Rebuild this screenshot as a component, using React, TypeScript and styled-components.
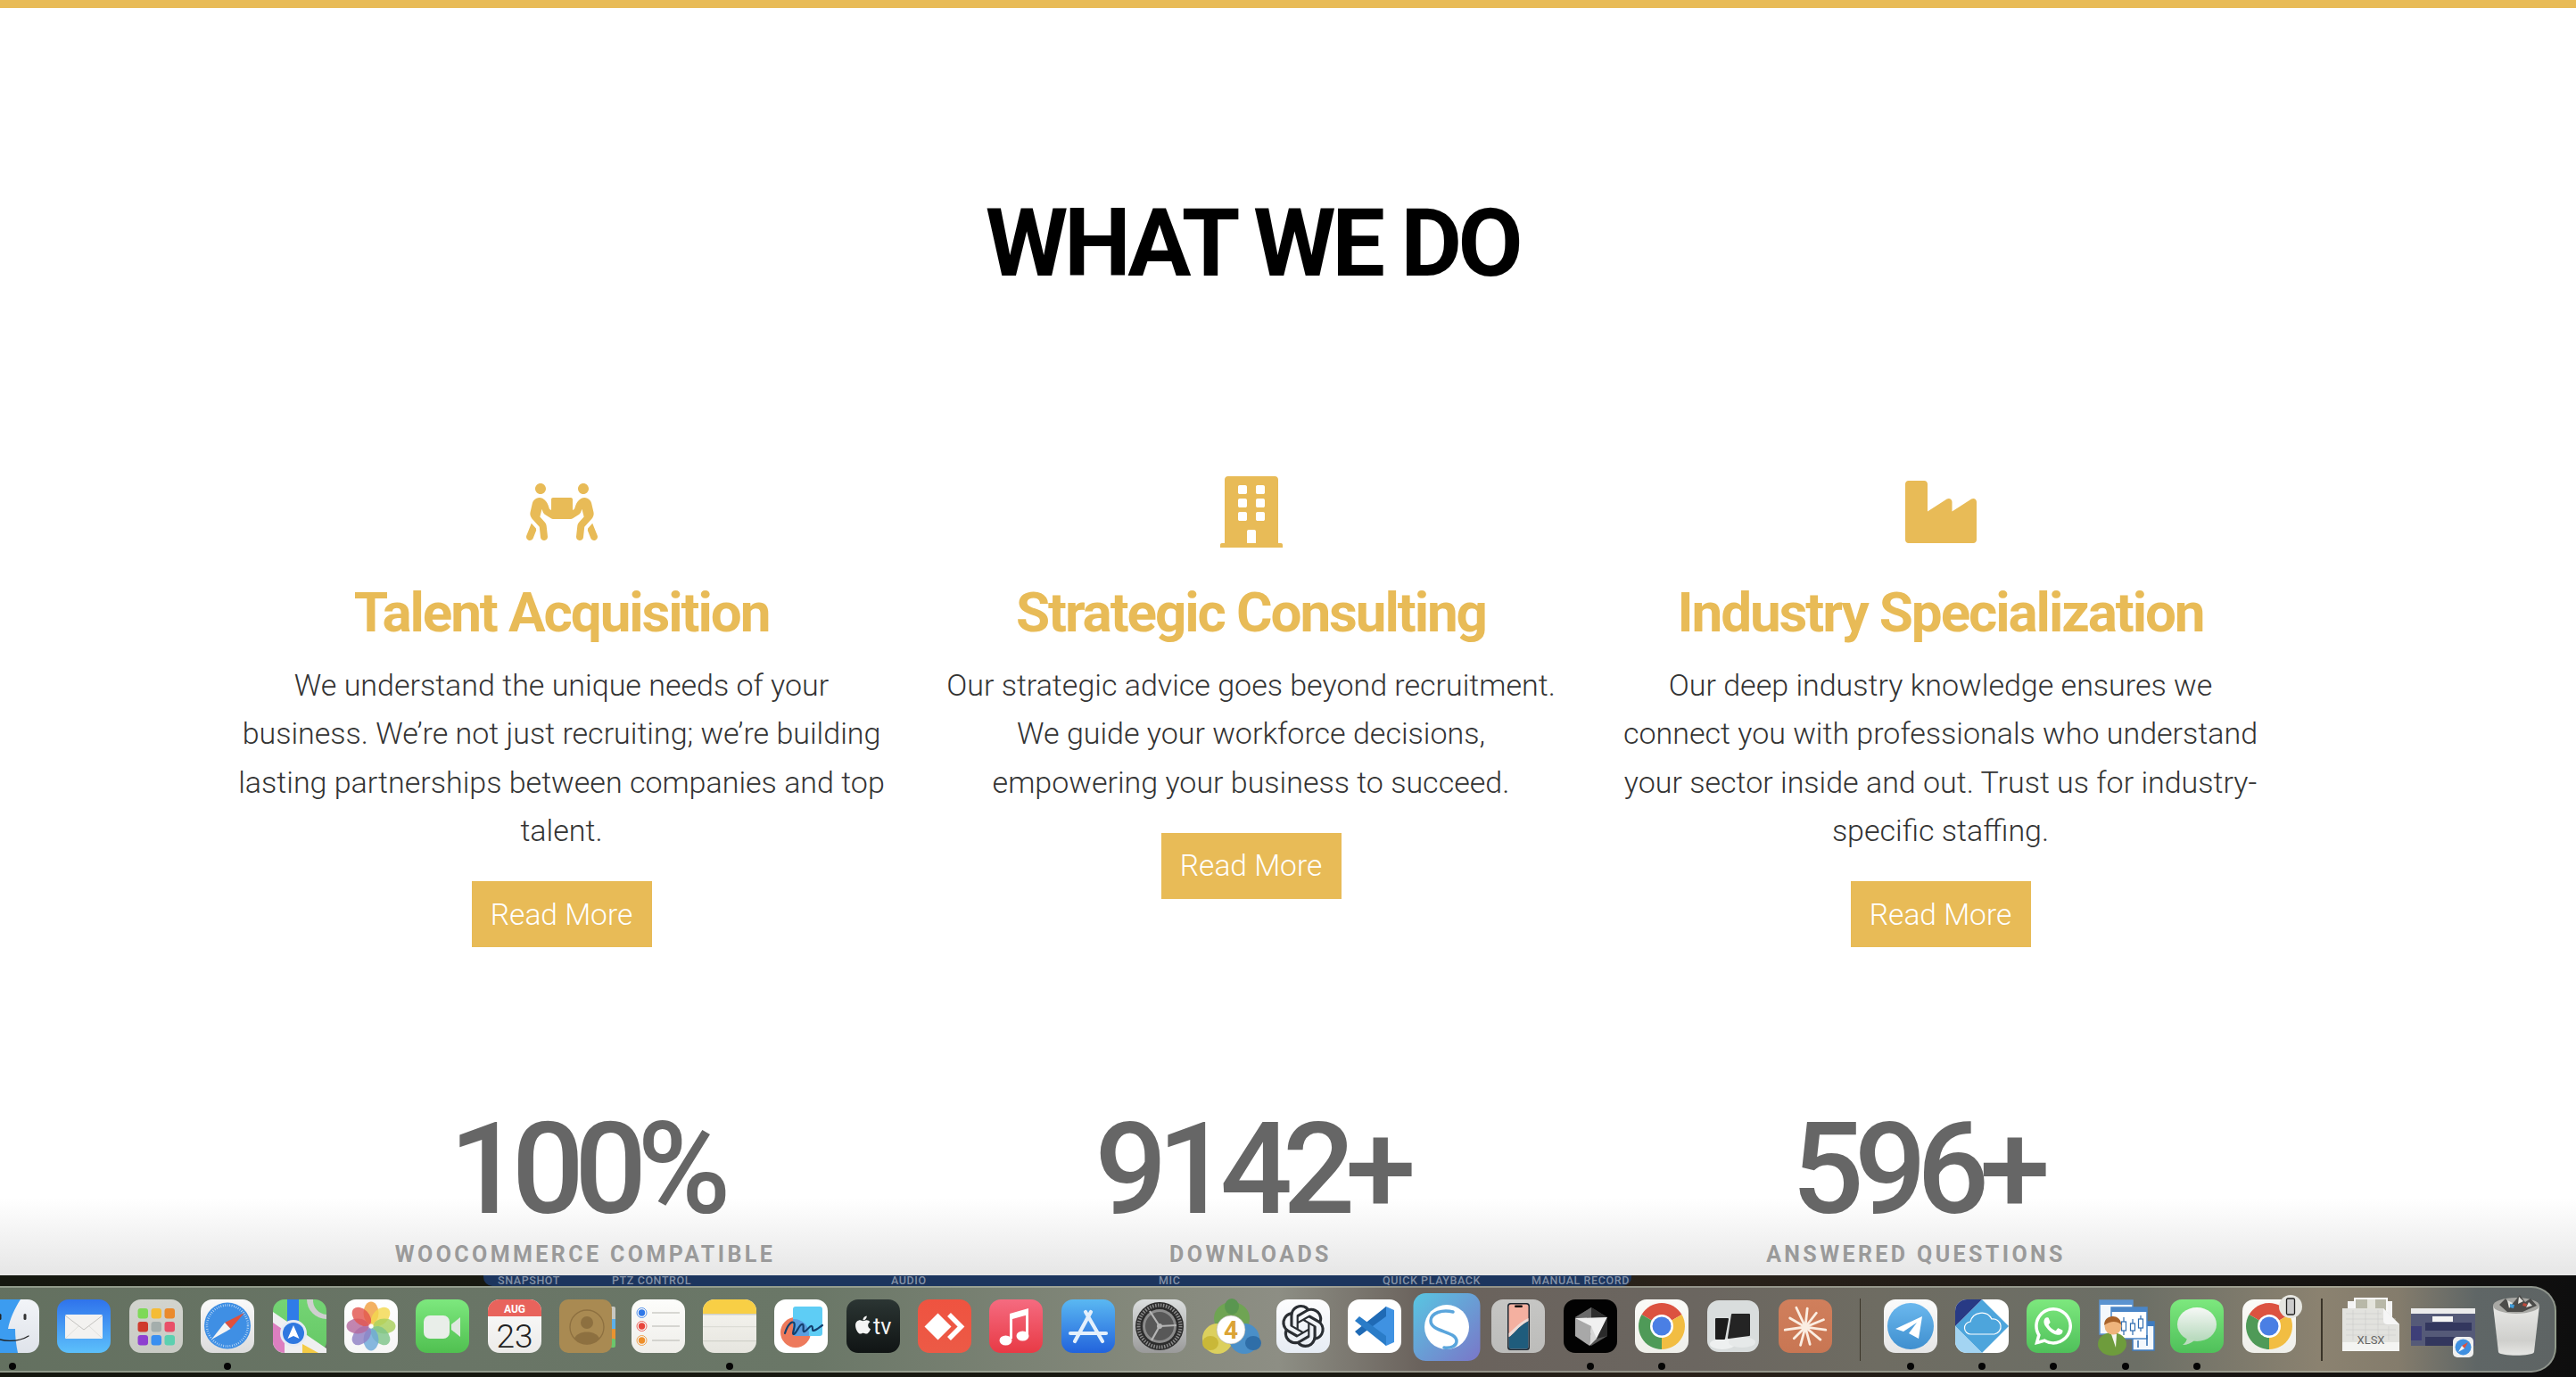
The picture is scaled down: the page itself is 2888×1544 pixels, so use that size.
import { FC, ReactNode } from 'react';
import styled, { createGlobalStyle } from 'styled-components';
import { FaPeopleCarry, FaBuilding, FaIndustry, FaApple, FaWhatsapp } from 'react-icons/fa';
import { SiOpenai } from 'react-icons/si';

const GOLD = '#e8bb57';
const dockFont = 'Roboto, sans-serif';

const services = [
  {
    icon: <FaPeopleCarry />,
    title: 'Talent Acquisition',
    text: 'We understand the unique needs of your business. We’re not just recruiting; we’re building lasting partnerships between companies and top talent.',
    width: 730,
  },
  {
    icon: <FaBuilding />,
    title: 'Strategic Consulting',
    text: 'Our strategic advice goes beyond recruitment. We guide your workforce decisions, empowering your business to succeed.',
    width: 700,
  },
  {
    icon: <FaIndustry />,
    title: 'Industry Specialization',
    text: 'Our deep industry knowledge ensures we connect you with professionals who understand your sector inside and out. Trust us for industry-specific staffing.',
    width: 730,
  },
];

const stats = [
  { value: '100%', label: 'WooCommerce Compatible' },
  { value: '9142+', label: 'Downloads' },
  { value: '596+', label: 'Answered Questions' },
];

const toolbarLabels = [
  { label: 'SNAPSHOT', width: 128 },
  { label: 'PTZ CONTROL', width: 313 },
  { label: 'AUDIO', width: 300 },
  { label: 'MIC', width: 251 },
  { label: 'QUICK PLAYBACK', width: 167 },
  { label: 'MANUAL RECORD', width: 110 },
];

// app icon tile, 60 units square, drawn with an optional top to bottom gradient
const Tile: FC<{ top: string; bottom?: string; children?: ReactNode }> = ({ top, bottom, children }) => {
  const gid = 'g' + (top + (bottom || top)).replace(/#/g, '');
  return (
    <svg viewBox="0 0 60 60" width="60" height="60">
      <defs>
        <linearGradient id={gid} x1="0" y1="0" x2="0" y2="1">
          <stop offset="0" stopColor={top} />
          <stop offset="1" stopColor={bottom || top} />
        </linearGradient>
      </defs>
      <rect width="60" height="60" rx="13" fill={`url(#${gid})`} />
      {children}
    </svg>
  );
};

const Finder = () => (
  <Tile top="#f2f4f8" bottom="#dfe3ea">
    <path d="M13 0h26c-6 9-12 22-14 33h8c0 9 1 18 3 27H13A13 13 0 0 1 0 47V13A13 13 0 0 1 13 0z" fill="#3c9cf0" />
    <rect x="14.500" y="16" width="3" height="7" rx="1.500" fill="#222" />
    <rect x="42.500" y="16" width="3" height="7" rx="1.500" fill="#333" />
    <path d="M3 39c14 10 34 9 45 2" fill="none" stroke="#222" strokeWidth="1.300" strokeLinecap="round" />
  </Tile>
);

const Mail = () => (
  <Tile top="#2f73ec" bottom="#5cc0fb">
    <rect x="9" y="17" width="42" height="27" rx="1.500" fill="#f3f2f0" />
    <path d="M9 18l21 16 21-16" fill="none" stroke="#c4c3c0" strokeWidth="1" />
    <path d="M9 44l15-14M51 44L36 30" fill="none" stroke="#dadad6" strokeWidth="0.800" />
  </Tile>
);

const launchColors = ['#7ed957', '#f5bc36', '#ea8a2c', '#cf3a2c', '#a4aeac', '#e94f68', '#8e3fd0', '#3a8ff0', '#5cd0b0'];
const Launchpad = () => (
  <Tile top="#d2d4ce" bottom="#c9cbc5">
    {launchColors.map((c, i) => (
      <rect key={c} x={9.500 + (i % 3) * 15} y={10 + Math.floor(i / 3) * 15} width="11.500" height="11.500" rx="3" fill={c} />
    ))}
  </Tile>
);

const CompassNeedle = () => (
  <>
    <path d="M49 15L33.500 33 27 26z" fill="#e0503c" />
    <path d="M12 45l15-19 6.500 7z" fill="#f4f4f4" />
  </>
);

const Safari = () => (
  <Tile top="#fafafa" bottom="#dcdcdc">
    <circle cx="30" cy="29.500" r="26" fill="#3f8fe4" />
    <circle cx="30" cy="29.500" r="23" fill="none" stroke="#cfe4f8" strokeWidth="2.500" strokeDasharray="0.700 1.800" />
    <CompassNeedle />
  </Tile>
);

const Maps = () => (
  <Tile top="#74d474" bottom="#66c866">
    <path d="M0 14L60 55v5H13A13 13 0 0 1 0 47z" fill="#efeff1" />
    <path d="M0 26l13 9v25A13 13 0 0 1 0 47z" fill="#dc7fc0" />
    <path d="M33 50l18 10H33z" fill="#f4cb45" />
    <path d="M38 0a22 22 0 0 0 22 22v-5a16 16 0 0 1-15-17z" fill="#cfcfcf" />
    <path d="M16 0h13v30H16z" fill="#2f7ce8" />
    <circle cx="23" cy="38" r="15" fill="#e6ebf4" />
    <circle cx="23" cy="38" r="12" fill="#2f78e0" />
    <path d="M23 29l6.500 15-6.500-3-6.500 3z" fill="#fff" />
  </Tile>
);

const petals = ['#f0a040', '#f3d84f', '#a8cf5c', '#7fc48a', '#6ca8d8', '#8f80c4', '#b56a9f', '#e2564f'];
const Photos = () => (
  <Tile top="#fff" bottom="#f6f6f6">
    {petals.map((c, i) => (
      <ellipse key={c} cx="30" cy="15" rx="8.500" ry="12.500" fill={c} opacity="0.82" transform={`rotate(${i * 45} 30 30)`} />
    ))}
  </Tile>
);

const FaceTime = () => (
  <Tile top="#7de87e" bottom="#50c050">
    <rect x="9" y="18" width="29" height="26" rx="7" fill="#e9eee9" />
    <path d="M40 28l10-8v22l-10-8z" fill="#dfe8df" />
  </Tile>
);

const Calendar = () => (
  <Tile top="#fcfcfc" bottom="#ecebe9">
    <path d="M0 19V13A13 13 0 0 1 13 0h34a13 13 0 0 1 13 13v6z" fill="#e8635c" />
    <text x="30" y="15" textAnchor="middle" fontSize="12" fontWeight="700" fill="#fff" fontFamily={dockFont}>AUG</text>
    <text x="30" y="54" textAnchor="middle" fontSize="37" fontWeight="300" fill="#222" fontFamily={dockFont}>23</text>
  </Tile>
);

const Contacts = () => (
  <svg viewBox="0 0 60 60" width="60" height="60">
    <rect x="54" y="8" width="9" height="16" rx="2" fill="#c8c8c2" />
    <rect x="54" y="22" width="9" height="12" fill="#5cb0ea" />
    <rect x="54" y="33" width="9" height="12" fill="#ea9330" />
    <rect x="54" y="44" width="9" height="10" rx="2" fill="#6cc66c" />
    <rect width="59" height="60" rx="10" fill="#a98a52" />
    <circle cx="31" cy="31" r="19" fill="none" stroke="#8d7040" strokeWidth="1.300" />
    <circle cx="31" cy="26" r="7" fill="#8d7040" />
    <path d="M17 44c3-10 25-10 28 0a19 19 0 0 1-28 0z" fill="#8d7040" />
  </svg>
);

const Reminders = () => (
  <Tile top="#fdfdfb" bottom="#efeeea">
    {[
      { y: 15, c: '#2f78e8' },
      { y: 30, c: '#e8453c' },
      { y: 46, c: '#ef8f2a' },
    ].map(r => (
      <g key={r.y}>
        <circle cx="11.500" cy={r.y} r="5.500" fill="none" stroke={r.c} strokeWidth="0.800" />
        <circle cx="11.500" cy={r.y} r="3.700" fill={r.c} />
        <rect x="23" y={r.y - 0.500} width="31" height="1" fill="#b5b5b0" />
      </g>
    ))}
  </Tile>
);

const Notes = () => (
  <Tile top="#f7f6f1" bottom="#e6e5df">
    <path d="M0 16V13A13 13 0 0 1 13 0h34a13 13 0 0 1 13 13v3z" fill="#f8cf45" />
    <rect y="16" width="60" height="1.500" fill="#cfcfc8" />
    <rect y="30" width="60" height="1.200" fill="#dcdcd5" />
    <rect y="46" width="60" height="1.200" fill="#d0d0c9" />
  </Tile>
);

const Freeform = () => (
  <Tile top="#fff">
    <circle cx="24" cy="37" r="17" fill="#ed7a5c" />
    <rect x="21" y="8" width="33" height="33" rx="3" fill="#5ecdf5" />
    <path d="M21 22a17 17 0 0 1 18 19H24a3 3 0 0 1-3-3z" fill="#5a9fe0" />
    <path d="M12 38c3-10 8-14 10-12 3 3-3 13 0 13 3-1 7-13 10-11 2 2-1 9 2 8s6-7 8-6c2 1 0 5 2 5 3 0 7-4 10-6" fill="none" stroke="#14406e" strokeWidth="2.200" strokeLinecap="round" />
  </Tile>
);

const AppleTv = () => (
  <Tile top="#2b3533" bottom="#101414">
    <FaApple x={7} y={17} size={23} color="#f4f4f4" />
    <text x="30" y="39" fontSize="25" fontWeight="400" fill="#f4f4f4" fontFamily={dockFont}>tv</text>
  </Tile>
);

const AnyDesk = () => (
  <Tile top="#ef5340" bottom="#ec5a46">
    <path d="M22.500 15.500l15 15-15 15-15-15z" fill="#fff" />
    <path d="M35 17l13.500 13.500L35 44" fill="none" stroke="#fff" strokeWidth="5.500" />
  </Tile>
);

const Music = () => (
  <Tile top="#f56b80" bottom="#e83a45">
    <path d="M23 16l21-6v7l-18 5v22h-3zM41 12h3v29h-3z" fill="#fff" />
    <ellipse cx="18.500" cy="46" rx="7" ry="5.500" fill="#fff" />
    <ellipse cx="37.500" cy="41" rx="7" ry="5.500" fill="#fff" />
  </Tile>
);

const AppStore = () => (
  <Tile top="#5ab8f2" bottom="#2263dc">
    <path d="M27 14l19 33M33 14L15 47" stroke="#e4f0fc" strokeWidth="4.200" strokeLinecap="round" />
    <path d="M10 38h40" stroke="#e4f0fc" strokeWidth="4.200" strokeLinecap="round" />
  </Tile>
);

const Settings = () => (
  <Tile top="#dcdfdf" bottom="#9a9a9a">
    <circle cx="30" cy="30" r="27" fill="#2c2c2c" />
    <circle cx="30" cy="30" r="23.500" fill="none" stroke="#8a8a8a" strokeWidth="4" strokeDasharray="1.500 1.500" />
    <circle cx="30" cy="30" r="19" fill="#8c8c8c" />
    <circle cx="30" cy="30" r="16" fill="#585858" />
    <g stroke="#b5b5b5" strokeWidth="2.200">
      <path d="M30 30L19 13" />
      <path d="M30 30l19-1" />
      <path d="M30 30L21 46" />
    </g>
    <circle cx="30" cy="30" r="3" fill="#b5b5b5" />
  </Tile>
);

const MetaTrader = () => (
  <svg viewBox="0 0 60 60" width="60" height="60">
    <ellipse cx="30" cy="21" rx="20" ry="18" fill="#6fa453" />
    <ellipse cx="30" cy="8" rx="8" ry="9" fill="#5a9650" />
    <circle cx="14" cy="44" r="17" fill="#dcd05e" />
    <circle cx="44" cy="44" r="17" fill="#4a8fc8" />
    <ellipse cx="6" cy="49" rx="9" ry="8" fill="#c9b838" />
    <ellipse cx="54" cy="49" rx="9" ry="8" fill="#2f6ea8" />
    <circle cx="29" cy="34" r="16" fill="#fff" stroke="#a8a8a0" strokeWidth="0.600" />
    <text x="29" y="44" textAnchor="middle" fontSize="28" fontWeight="700" fill="#dba436" fontFamily={dockFont}>4</text>
  </svg>
);

const ChatGpt = () => (
  <Tile top="#fdfdfe" bottom="#e6ecf4">
    <SiOpenai x={6} y={6} size={48} color="#2a2e33" />
  </Tile>
);

const VsCode = () => (
  <Tile top="#fff">
    <path d="M43 8L21 30l22 22 9-4V12z" fill="#3f92e2" />
    <path d="M43 8L8 36l5 5 30-22z" fill="#1f6ab5" />
    <path d="M8 24l5-5 30 22v11z" fill="#2a7cc8" />
  </Tile>
);

const Simplenote = () => (
  <svg viewBox="0 0 60 60" width="60" height="60">
    <defs>
      <linearGradient id="sn" x1="0" y1="0" x2="1" y2="1">
        <stop offset="0" stopColor="#58c6e2" />
        <stop offset="1" stopColor="#7a76c8" />
      </linearGradient>
    </defs>
    <rect x="-7.500" y="-7" width="75" height="76" rx="14" fill="url(#sn)" />
    <circle cx="30" cy="31" r="25" fill="#fff" />
    <path d="M37 14c-12-3-25 1-25 10 0 13 29 11 29 23 0 5-6 8-14 7" fill="none" stroke="#5aa5dc" strokeWidth="3.500" strokeLinecap="round" />
  </svg>
);

const IPhone = () => (
  <Tile top="#c6c6c4" bottom="#bcbcba">
    <rect x="18" y="4" width="25" height="53" rx="3.500" fill="#1b2630" />
    <rect x="19.500" y="5.500" width="22" height="50" rx="2.500" fill="#f4b0a0" />
    <path d="M19.500 42c4-1 10-12 22-18v29a2.500 2.500 0 0 1-2.500 2.500H22a2.500 2.500 0 0 1-2.500-2.500z" fill="#1f5c7c" />
    <path d="M19.500 42c4-1 10-12 22-18v-3c-12 6-18 14-22 17z" fill="#ecdcd8" />
    <rect x="26" y="6.500" width="9" height="2.500" rx="1.200" fill="#111" />
  </Tile>
);

const BlackCube = () => (
  <Tile top="#020202">
    <path d="M31 9l18 11v21L31 52 13 41V20z" fill="#555" />
    <path d="M31 9l18 11-18 1z" fill="#2e2e2e" />
    <path d="M31 9L13 20l18 1z" fill="#6a6a6a" />
    <path d="M13 21l36-1-12 24z" fill="#f0f0f0" />
    <path d="M13 21l18 9-2 22-16-11z" fill="#a8a8a8" />
    <path d="M31 30l6 14-8 8z" fill="#d8d8d8" />
    <path d="M49 20v21l-12 3z" fill="#2a2a2a" />
  </Tile>
);

const ChromeMark = () => (
  <Tile top="#fbfbf8" bottom="#efefea">
    <path d="M30 30L7.500 17A26 26 0 0 1 52.500 17z" fill="#dc5240" />
    <path d="M30 30L7.500 17A26 26 0 0 0 30 56z" fill="#4f9a58" />
    <path d="M30 30L52.500 17A26 26 0 0 1 30 56z" fill="#f2bd42" />
    <circle cx="30" cy="30" r="13" fill="#fff" />
    <circle cx="30" cy="30" r="10.500" fill="#4a7fe4" />
  </Tile>
);

const ChromeDevice = () => (
  <BadgedIcon>
    <ChromeMark />
    <DeviceBadge>
      <svg viewBox="0 0 26 26" width="26" height="26">
        <circle cx="13" cy="13" r="13" fill="#e6e6e1" />
        <rect x="8.500" y="4" width="9" height="18" rx="1.500" fill="#ccc" stroke="#222" strokeWidth="1.300" />
      </svg>
    </DeviceBadge>
  </BadgedIcon>
);

const Windows = () => (
  <svg viewBox="0 0 60 60" width="60" height="60">
    <rect x="1" y="1" width="58" height="58" rx="13" fill="#d9dddd" />
    <ellipse cx="18" cy="50" rx="14" ry="6" fill="#eef0f0" />
    <ellipse cx="40" cy="48" rx="15" ry="6" fill="#e6e9e9" />
    <path d="M11 22h13l-4 22h-9z" fill="#1c1c1c" stroke="#1c1c1c" strokeWidth="2" strokeLinejoin="round" />
    <path d="M29 17h19v23l-23 3z" fill="#242424" stroke="#242424" strokeWidth="2" strokeLinejoin="round" />
  </svg>
);

const rays = [
  { a: -25, l: 24 },
  { a: 6, l: 21 },
  { a: 38, l: 20 },
  { a: 68, l: 22 },
  { a: 98, l: 23 },
  { a: 130, l: 22 },
  { a: 165, l: 20 },
  { a: 195, l: 21 },
  { a: 225, l: 18 },
  { a: 262, l: 23 },
  { a: 300, l: 20 },
];

const Claude = () => (
  <Tile top="#d07f5c" bottom="#c87653">
    <g stroke="#fbeee2" strokeWidth="2.800" strokeLinecap="round">
      {rays.map(r => (
        <path key={r.a} d={`M30 31V${31 - r.l}`} transform={`rotate(${r.a} 30 31)`} />
      ))}
    </g>
  </Tile>
);

const Telegram = () => (
  <Tile top="#fbfbfb" bottom="#e6e6e6">
    <defs>
      <linearGradient id="tg" x1="0" y1="0" x2="0" y2="1">
        <stop offset="0" stopColor="#6bb8ee" />
        <stop offset="1" stopColor="#3f8fcf" />
      </linearGradient>
    </defs>
    <circle cx="30" cy="30" r="26" fill="url(#tg)" />
    <path d="M13 33l30-14-4 25-11-6 9-12-15 10z" fill="#fff" />
  </Tile>
);

const CloudApp = () => (
  <Tile top="#fff">
    <path d="M30 0l30 30-30 30L0 30z" fill="#4da5dc" />
    <path d="M0 30L30 0H13A13 13 0 0 0 0 13z" fill="#283a85" />
    <path d="M0 30l30 30H13A13 13 0 0 1 0 47z" fill="#a3d4f2" />
    <path d="M18 39a7 7 0 0 1-1-14 13 13 0 0 1 24-3 8.500 8.500 0 0 1 3 17z" fill="none" stroke="#fff" strokeWidth="1.200" />
  </Tile>
);

const WhatsApp = () => (
  <Tile top="#7de87e" bottom="#4fc05a">
    <FaWhatsapp x={6} y={6} size={48} color="#fff" />
  </Tile>
);

const Traders = () => (
  <svg viewBox="0 0 60 60" width="60" height="60">
    <rect x="1" y="1" width="37" height="38" fill="#f4f8fc" stroke="#5b93d0" strokeWidth="1.500" />
    <rect x="1" y="1" width="37" height="5" fill="#5b93d0" />
    <rect x="38" y="25" width="24" height="32" fill="#f4f8fc" stroke="#3f7cc0" strokeWidth="1.500" />
    <rect x="38" y="25" width="24" height="5" fill="#3f7cc0" />
    <rect x="14" y="9" width="40" height="35" fill="#fff" stroke="#4a86c8" strokeWidth="1.500" />
    <rect x="14" y="9" width="40" height="5" fill="#4a86c8" />
    <g stroke="#2f6db0" strokeWidth="1.200" fill="#fff">
      <path d="M28 20v20M38 22v18M47 18v18" />
      <rect x="25.500" y="25" width="5" height="10" />
      <rect x="35.500" y="27" width="5" height="8" />
      <rect x="44.500" y="22" width="5" height="10" />
    </g>
    <path d="M44 46v8M54 40v12" stroke="#2f6db0" strokeWidth="1.500" />
    <ellipse cx="15" cy="50" rx="16" ry="13" fill="#6e9c3c" />
    <path d="M14 39h6l-1 15z" fill="#f6f6f0" />
    <circle cx="16" cy="30" r="9.500" fill="#efb47c" />
    <path d="M6 29c0-8 6-10 10-10s9 3 9 9c-5-4-12-4-19 1z" fill="#a8622a" />
  </svg>
);

const Messages = () => (
  <Tile top="#7de87e" bottom="#4fc05a">
    <defs>
      <linearGradient id="msg" x1="0" y1="0" x2="0" y2="1">
        <stop offset="0" stopColor="#f6f8f6" />
        <stop offset="1" stopColor="#b4d8ba" />
      </linearGradient>
    </defs>
    <ellipse cx="30" cy="28" rx="22" ry="19" fill="url(#msg)" />
    <path d="M19 42c0 4-2 7-5 9 5 0 10-2 14-6z" fill="#bcdcc0" />
  </Tile>
);

const XlsxFile = () => (
  <svg viewBox="0 0 64 60" width="64" height="60">
    <rect x="6" y="4" width="50" height="18" fill="#f4f4f4" />
    <rect x="13" y="0" width="38" height="22" fill="#f8f8f8" />
    <rect x="15" y="2" width="34" height="20" fill="#b8b8a8" />
    <rect x="28" y="2" width="9" height="20" fill="#e4e4dc" />
    <path d="M0 12h46l18 18v30H0z" fill="#e2e2de" />
    <rect y="50" width="64" height="10" fill="#f4f4f2" />
    <g stroke="#cfcfca" strokeWidth="0.600">
      <path d="M4 18h40M4 24h56M4 30h56M4 36h56M4 42h56" />
      <path d="M12 14v34M26 14v34M40 14v34M52 32v16" />
    </g>
    <path d="M46 12v13c0 4 2 5 5 5h13z" fill="#f6f6f6" />
    <text x="32" y="52" textAnchor="middle" fontSize="13" fill="#666" fontFamily={dockFont}>XLSX</text>
  </svg>
);

const WindowThumb = () => (
  <svg viewBox="0 0 72 66" width="72" height="66">
    <rect y="10" width="72" height="42" fill="#555a78" />
    <rect y="10" width="72" height="6" fill="#ececec" />
    <rect x="24" y="19" width="23" height="6" fill="#f4f4f4" />
    <rect x="16" y="26" width="52" height="9" fill="#33375e" />
    <rect x="16" y="42" width="50" height="10" fill="#33375e" />
    <rect y="30" width="12" height="16" fill="#3e3f78" />
    <rect x="47" y="42" width="23" height="23" rx="5" fill="#f0f0f0" />
    <circle cx="58.500" cy="53.500" r="9" fill="#3f8fe0" />
    <path d="M64 48l-4 7-3-3z" fill="#e0503c" />
    <path d="M53 59l4-7 3 3z" fill="#f4f4f4" />
  </svg>
);

const Trash = () => (
  <svg viewBox="0 0 54 70" width="54" height="70">
    <defs>
      <linearGradient id="bin" x1="0" y1="0" x2="0" y2="1">
        <stop offset="0" stopColor="#e8e8e6" />
        <stop offset="0.700" stopColor="#cfcfcc" />
        <stop offset="1" stopColor="#e6e6e4" />
      </linearGradient>
    </defs>
    <path d="M1 12l6 52c1 5 39 5 40 0l6-52z" fill="url(#bin)" />
    <ellipse cx="27" cy="12" rx="26" ry="9" fill="#a8a8a4" />
    <path d="M8 11l7-7 6 8 5-6 5-6 6 8 6-4 7 8-16 7H17z" fill="#4c4c4a" />
    <path d="M17 6l6 3-4 6zM30 2l5 5-6 3zM41 8l4 4-7 2z" fill="#e4e4e0" />
    <path d="M20 10l5 1-1 4-4-1z" fill="#3f9bd8" />
    <path d="M35 9l4 1-1 3-4-1z" fill="#c04a3c" />
  </svg>
);

const dockApps = [
  { key: 'finder', node: <Finder />, dot: true },
  { key: 'mail', node: <Mail /> },
  { key: 'launchpad', node: <Launchpad /> },
  { key: 'safari', node: <Safari />, dot: true },
  { key: 'maps', node: <Maps /> },
  { key: 'photos', node: <Photos /> },
  { key: 'facetime', node: <FaceTime /> },
  { key: 'calendar', node: <Calendar /> },
  { key: 'contacts', node: <Contacts /> },
  { key: 'reminders', node: <Reminders /> },
  { key: 'notes', node: <Notes />, dot: true },
  { key: 'freeform', node: <Freeform /> },
  { key: 'tv', node: <AppleTv /> },
  { key: 'anydesk', node: <AnyDesk /> },
  { key: 'music', node: <Music /> },
  { key: 'appstore', node: <AppStore /> },
  { key: 'settings', node: <Settings /> },
  { key: 'mt4', node: <MetaTrader /> },
  { key: 'chatgpt', node: <ChatGpt /> },
  { key: 'vscode', node: <VsCode /> },
  { key: 'simplenote', node: <Simplenote /> },
  { key: 'iphone', node: <IPhone /> },
  { key: 'cube', node: <BlackCube />, dot: true },
  { key: 'chrome', node: <ChromeMark />, dot: true },
  { key: 'windows', node: <Windows /> },
  { key: 'claude', node: <Claude /> },
];

const recentApps = [
  { key: 'telegram', node: <Telegram />, dot: true },
  { key: 'cloud', node: <CloudApp />, dot: true },
  { key: 'whatsapp', node: <WhatsApp />, dot: true },
  { key: 'traders', node: <Traders />, dot: true },
  { key: 'messages', node: <Messages />, dot: true },
  { key: 'chrome2', node: <ChromeDevice /> },
];

const App: FC = () => (
  <>
    <GlobalStyle />
    <Page>
      <TopBar />
      <Content>
        <Heading>WHAT WE DO</Heading>
        <Services>
          {services.map(s => (
            <Service key={s.title}>
              <ServiceIcon>{s.icon}</ServiceIcon>
              <ServiceTitle>{s.title}</ServiceTitle>
              <ServiceText $width={s.width}>{s.text}</ServiceText>
              <ReadMore>Read More</ReadMore>
            </Service>
          ))}
        </Services>
        <Stats>
          {stats.map(s => (
            <Stat key={s.label}>
              <StatValue>{s.value}</StatValue>
              <StatLabel>{s.label}</StatLabel>
            </Stat>
          ))}
        </Stats>
      </Content>
      <Desktop>
        <WindowStrip>
          {toolbarLabels.map(t => (
            <StripLabel key={t.label} $width={t.width}>{t.label}</StripLabel>
          ))}
        </WindowStrip>
        <Dock>
          {dockApps.map(item => (
            <DockItem key={item.key}>
              {item.node}
              {item.dot && <RunDot />}
            </DockItem>
          ))}
          <DockDivider $before={10.5} $after={5} />
          {recentApps.map(item => (
            <DockItem key={item.key}>
              {item.node}
              {item.dot && <RunDot />}
            </DockItem>
          ))}
          <DockDivider $before={8.5} $after={2} />
          <StackItem $lead={0} $top={-2}><XlsxFile /></StackItem>
          <StackItem $lead={-7.5} $top={0}><WindowThumb /></StackItem>
          <StackItem $lead={-1.5} $top={-5}><Trash /></StackItem>
        </Dock>
      </Desktop>
    </Page>
  </>
);

const GlobalStyle = createGlobalStyle`
  html, body {
    margin: 0;
    padding: 0;
    background: #fff;
  }
  body {
    font-family: Roboto, sans-serif;
  }
`;

const Page = styled.div`
  width: 2888px;
  height: 1544px;
  display: flex;
  flex-direction: column;
  overflow: hidden;
`;

const TopBar = styled.div`
  height: 9px;
  flex-shrink: 0;
  background: ${GOLD};
`;

const Content = styled.div`
  height: 1421px;
  flex-shrink: 0;
  padding-left: 243px;
  box-sizing: border-box;
  background: linear-gradient(to bottom, #fff 0, #fff 1335px, #e6e6e6 1421px);
`;

const Heading = styled.h2`
  width: 2322px;
  margin: 0;
  padding-top: 198px;
  text-align: center;
  font-size: 106px;
  line-height: 132px;
  font-weight: 700;
  letter-spacing: -4.5px;
  color: #000;
`;

const Services = styled.div`
  width: 2322px;
  display: grid;
  grid-template-columns: repeat(3, 773px);
  margin-top: 195px;
`;

const Service = styled.div`
  display: flex;
  flex-direction: column;
  align-items: center;
  height: 530px;
`;

const ServiceIcon = styled.div`
  height: 80px;
  display: flex;
  align-items: center;
  justify-content: center;
  color: ${GOLD};
  font-size: 80px;
  svg {
    display: block;
  }
`;

const ServiceTitle = styled.h3`
  margin: 39px 0 0;
  font-size: 62px;
  line-height: 68px;
  font-weight: 700;
  letter-spacing: -2.1px;
  color: ${GOLD};
`;

const ServiceText = styled.p<{ $width: number }>`
  margin: 20px 0 0;
  width: ${p => p.$width}px;
  text-align: center;
  font-size: 34px;
  line-height: 54.3px;
  font-weight: 300;
  color: #333;
`;

const ReadMore = styled.a`
  margin-top: 30px;
  width: 202px;
  height: 74px;
  flex-shrink: 0;
  display: flex;
  align-items: center;
  justify-content: center;
  background: ${GOLD};
  color: #fff;
  font-size: 33.5px;
  font-weight: 300;
`;

const Stats = styled.div`
  width: 2238px;
  margin-left: 40px;
  display: grid;
  grid-template-columns: repeat(3, 746px);
  margin-top: 172px;
`;

const Stat = styled.div`
  display: flex;
  flex-direction: column;
  align-items: center;
`;

const StatValue = styled.div`
  font-size: 143px;
  line-height: 150px;
  font-weight: 500;
  letter-spacing: -11px;
  color: #666;
`;

const StatLabel = styled.div`
  margin-top: 6px;
  font-size: 25px;
  line-height: 30px;
  font-weight: 700;
  letter-spacing: 3.4px;
  text-transform: uppercase;
  color: #9a9a9a;
`;

const Desktop = styled.div`
  flex: 1;
  background: linear-gradient(to right, #15170f, #1a1a12 50%, #2a221a 65%, #0e0e0e 100%);
  display: flex;
  flex-direction: column;
`;

const WindowStrip = styled.div`
  margin-left: 542px;
  width: 1287px;
  height: 12px;
  flex-shrink: 0;
  background: #1c355e;
  border-radius: 0 0 10px 10px;
  display: flex;
  padding-left: 16px;
  box-sizing: border-box;
`;

const StripLabel = styled.span<{ $width: number }>`
  width: ${p => p.$width}px;
  flex-shrink: 0;
  font-size: 12.5px;
  line-height: 12px;
  font-weight: 500;
  letter-spacing: 0.6px;
  color: #8290a6;
  white-space: nowrap;
`;

const Dock = styled.div`
  width: 2920px;
  margin-left: -54px;
  height: 97px;
  box-sizing: border-box;
  flex-shrink: 0;
  display: flex;
  align-items: flex-start;
  padding: 13px 0 0 38px;
  gap: 20.4px;
  border: 2px solid rgba(190, 195, 180, 0.5);
  border-left: none;
  border-radius: 0 28px 28px 0;
  background: linear-gradient(
    to right,
    #63705f 0,
    #697566 19%,
    #6a7767 33%,
    #85897c 46%,
    #8d8e84 51%,
    #6a625c 56.5%,
    #6b6660 67%,
    #6e6c62 74%,
    #6c6f66 84%,
    #8b8270 91%,
    #847c6c 94%,
    #5f6666 97%,
    #5e6464 100%
  );
`;

const DockItem = styled.div`
  width: 60px;
  height: 60px;
  flex-shrink: 0;
  position: relative;
  display: flex;
  justify-content: center;
  svg {
    display: block;
    overflow: visible;
    flex-shrink: 0;
  }
`;

const RunDot = styled.div`
  position: absolute;
  top: 71px;
  width: 8px;
  height: 8px;
  border-radius: 50%;
  background: #050505;
`;

const DockDivider = styled.div<{ $before: number; $after: number }>`
  width: 1.5px;
  height: 70px;
  margin: -1px ${p => p.$after}px 0 ${p => p.$before}px;
  flex-shrink: 0;
  background: #3a3428;
`;

const StackItem = styled.div<{ $lead: number; $top: number }>`
  flex-shrink: 0;
  margin-left: ${p => p.$lead}px;
  margin-top: ${p => p.$top}px;
  svg {
    display: block;
  }
`;

const BadgedIcon = styled.div`
  position: relative;
  width: 60px;
  height: 60px;
`;

const DeviceBadge = styled.div`
  position: absolute;
  top: -5px;
  right: -7px;
  width: 26px;
  height: 26px;
`;

export default App;
